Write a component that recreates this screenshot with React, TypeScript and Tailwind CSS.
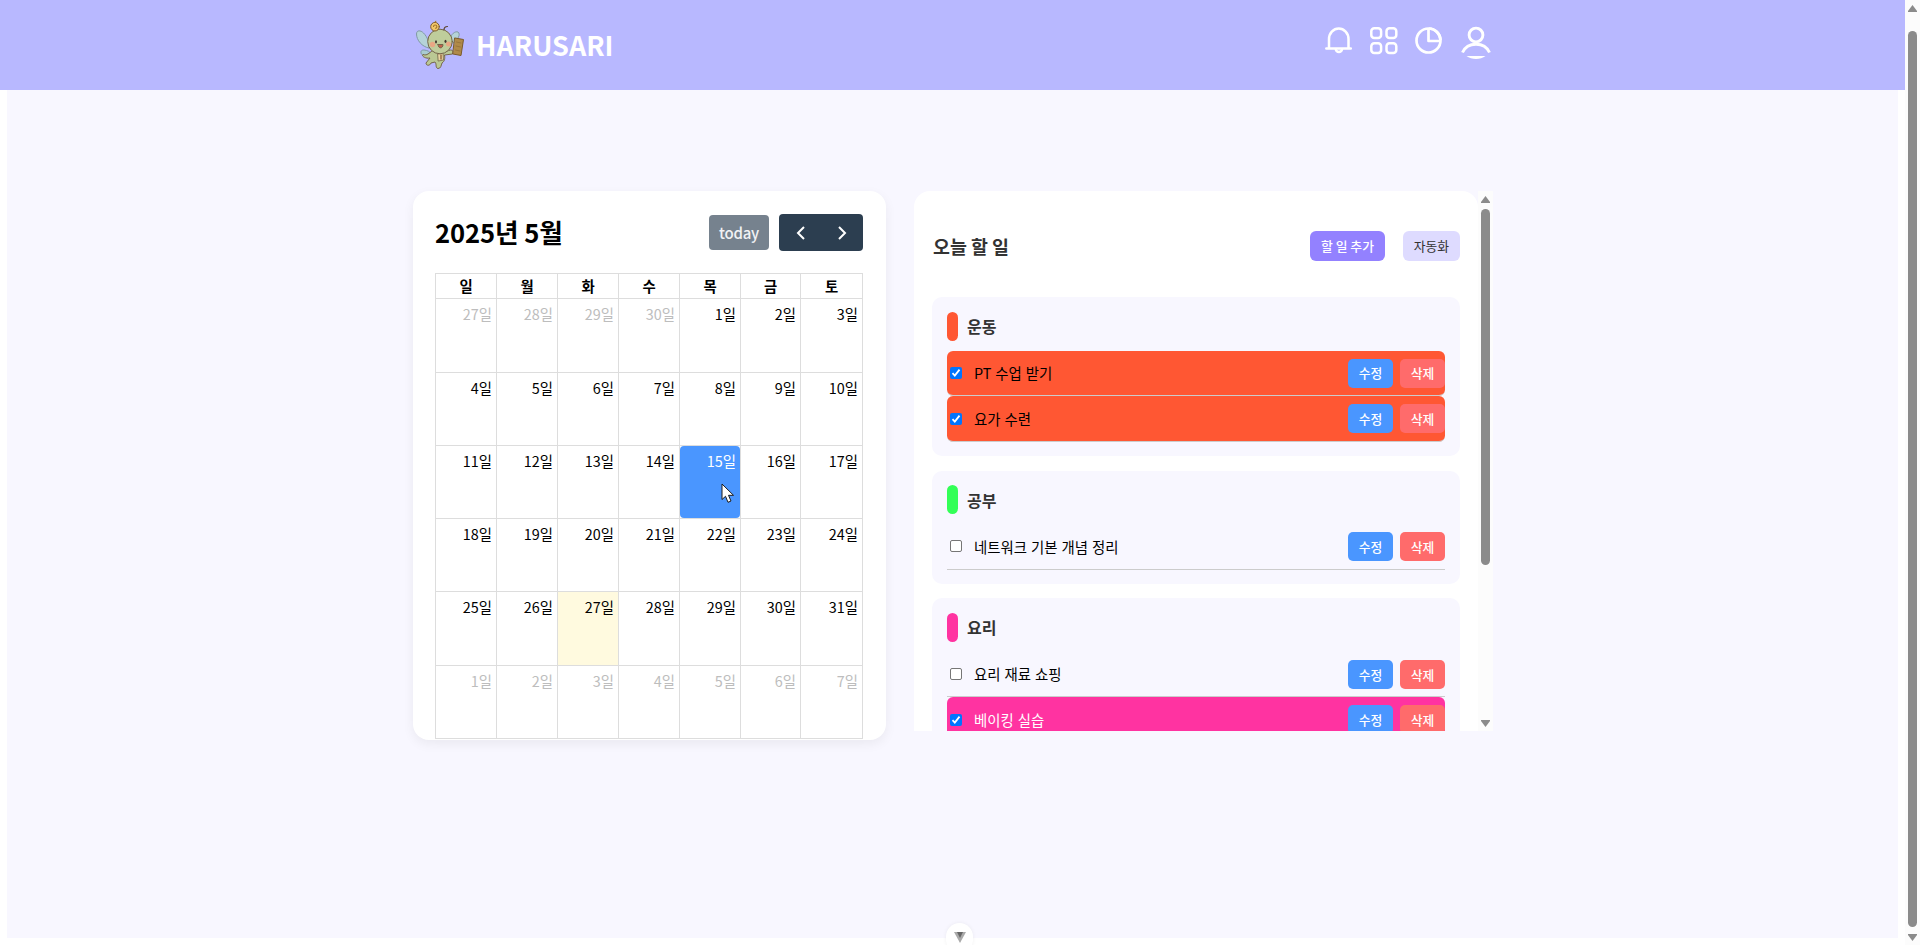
import React from "react";

const WEEKDAYS = ["일", "월", "화", "수", "목", "금", "토"];

type Day = { n: number; other: boolean };

const DAYS: Day[] = Array.from({ length: 42 }, (_, i) => {
  if (i < 4) return { n: 27 + i, other: true };
  if (i < 35) return { n: i - 3, other: false };
  return { n: i - 34, other: true };
});

function Mascot() {
  return (
    <svg className="h-[50px] w-[50px]" viewBox="0 0 50 50" fill="none" stroke="#75654a" strokeWidth="1" strokeLinejoin="round" strokeLinecap="round">
      <path d="M15 28C8 27 2.500 20 2.500 14c0-4 4-4 7-1 4 4 6 10 5.500 15z" fill="#b5d3d8" stroke="#8199a5" />
      <path d="M14 31c-5-2-7.500-1-7 2s5 3 9 0z" fill="#a9cbd2" stroke="#7f9aa5" />
      <path d="M36 19c1-5 5-8 8-7 3 2 0 8-5 11z" fill="#b5d3d8" stroke="#8199a5" />
      <path d="M18 31c-3 2-5 5-9 3.500-2 1 2 4.500 7 3.500l-4 5c0 3 4 3 5 0l4-1c2 2 0 6 3 6.500 3 0 3-3 4-5.500 3-2 3-5 2.500-8l8-1c2-2 0-4-2-4l-7 2z" fill="#bac894" />
      <path d="M24 34l5-1 .5 7-5 1z" fill="#e9d4a2" strokeWidth=".8" />
      <path d="M27 35v4" stroke="#8b5b33" strokeWidth="1.300" />
      <circle cx="26" cy="21.500" r="12.300" fill="#bfcd9b" />
      <circle cx="21" cy="6.700" r="4.300" fill="#f2c868" stroke="#7b5b32" />
      <path d="M19.500 6.500a1.700 1.700 0 1 1 2 1.800M21 2.300l.8-1" stroke="#a3742f" strokeWidth="1.100" />
      <path d="M30 10c0-3 1.500-3.500 3.500-3.500" stroke="#5c4634" strokeWidth="1.200" />
      <circle cx="18.500" cy="24.500" r="2.700" fill="#e9a783" stroke="none" />
      <circle cx="34.500" cy="24" r="2.500" fill="#e9a783" stroke="none" />
      <ellipse cx="22" cy="21.800" rx="1" ry="1.600" fill="#43372d" stroke="none" />
      <ellipse cx="31.500" cy="21.300" rx="1" ry="1.600" fill="#43372d" stroke="none" />
      <path d="M24 24.500h5c0 4.500-5 4.500-5 0z" fill="#c0634b" />
      <path d="M41 18l8.500 1.500-2.500 16-8-1.500z" fill="#b08a49" stroke="#7a5a2a" />
      <path d="M42.500 22l4.500 1M42 26l4.500 1M41.500 30l4.500 1" stroke="#8f6b36" strokeWidth=".7" />
    </svg>
  );
}

function Header() {
  return (
    <header className="h-[90px] w-[1905px] bg-[#b8b8ff]">
      <div className="flex h-full pl-[414px]">
        <div className="flex w-[911px] pt-[20px]">
          <Mascot />
          <h1 className="ml-[12px] mt-[5px] text-[27px] leading-[40px] font-bold text-white">HARUSARI</h1>
        </div>
        <div className="flex items-start gap-[17px] pt-[26px]">
          <svg className="-ml-px h-[29px] w-[29px]" viewBox="0 0 29 29" fill="none" stroke="#fff" strokeWidth="2.500" strokeLinecap="round">
            <path d="M5 22V13a9.700 10.500 0 0 1 19.500 0v9M2.300 22.500h24.500" />
            <path d="M11.800 23.500a3.200 3.200 0 0 0 6.200 0" />
          </svg>
          <svg className="h-[29px] w-[28px]" viewBox="0 0 28 29" fill="none" stroke="#fff" strokeWidth="2.500">
            <rect x="1.300" y="2.300" width="9.800" height="9.800" rx="3" />
            <rect x="16.500" y="2.300" width="9.800" height="9.800" rx="3" />
            <rect x="1.300" y="17.200" width="9.800" height="9.800" rx="3" />
            <rect x="16.500" y="17.200" width="9.800" height="9.800" rx="3" />
          </svg>
          <svg className="h-[29px] w-[28px]" viewBox="0 0 28 29" fill="none" stroke="#fff" strokeWidth="2.700" strokeLinejoin="round">
            <circle cx="13.500" cy="14.500" r="12" />
            <path d="M13.500 2v13H26" />
            <path d="M14 2.500A12 12 0 0 1 25.500 14" />
          </svg>
          <svg className="ml-px h-[33px] w-[30px]" viewBox="0 0 30 33" fill="none" stroke="#fff" strokeWidth="2.900">
            <circle cx="15" cy="9" r="6.900" />
            <path d="M1.500 26.500C6.500 15.500 23.500 15.500 28.500 26.500" />
            <path d="M5.500 30h19c-5 4-14 4-19 0z" fill="#fff" stroke="none" />
          </svg>
        </div>
      </div>
    </header>
  );
}

function Calendar() {
  return (
    <section className="h-[549px] w-[473px] rounded-[16px] bg-white px-[22px] pt-[23px] shadow-[0_4px_12px_rgba(0,0,0,0.06)]">
      <div className="flex h-[37px] w-[428px] items-center">
        <h2 className="flex-1 pb-[2px] text-[25.600px] leading-[35px] font-bold tracking-[-0.100px] text-black">2025년 5월</h2>
        <button className="mr-[10px] h-[35px] w-[60px] rounded-[4px] bg-[#76828e] text-[15px] leading-[35px] font-medium tracking-[-0.200px] text-[#f1f2f4]">today</button>
        <div className="flex h-[37px] w-[84px] items-center justify-between rounded-[4px] bg-[#2c3e50] pr-[14px] pl-[15px]">
          <svg width="14" height="16" viewBox="0 0 14 16" fill="none" stroke="#fff" strokeWidth="2"><path d="M10 2L4 8l6 6" /></svg>
          <svg width="14" height="16" viewBox="0 0 14 16" fill="none" stroke="#fff" strokeWidth="2"><path d="M4 2l6 6-6 6" /></svg>
        </div>
      </div>
      <div className="mt-[22px] grid w-[428px] grid-cols-[61px_61px_61px_61px_61px_60px_62px] grid-rows-[25px_74px_73px_73px_73px_74px_73px] border-t border-l border-[#ddd] text-black">
        {WEEKDAYS.map((d) => (
          <div key={d} className="border-r border-b border-[#ddd] text-center text-[14.400px] leading-[24px] font-bold">{d}</div>
        ))}
        {DAYS.map((d, i) => {
          const selected = !d.other && d.n === 15;
          const today = !d.other && d.n === 27;
          const tone = selected ? "text-white" : today ? "bg-[#fffadf]" : d.other ? "text-[#bdbdbd]" : "";
          return (
            <div key={i} className={"relative border-r border-b border-[#ddd] text-right text-[14.400px] leading-[20px] " + tone}>
              <div className={"h-full pt-[5px] pr-[4px] " + (selected ? "rounded-[4px] bg-[#4a96ff]" : "")}>{d.n}일</div>
              {selected && (
                <svg className="absolute top-[37px] left-[41px]" width="14" height="21" viewBox="0 0 14 21">
                  <path d="M1 1v15.500l3.500-3.200 2.500 6 3-1.300-2.500-5.700h5z" fill="#fff" stroke="#1c1c1c" />
                </svg>
              )}
            </div>
          );
        })}
      </div>
    </section>
  );
}

type Todo = { text: string; done?: string };

function Category({ name, bar, todos }: { name: string; bar: string; todos: Todo[] }) {
  return (
    <div className="mb-[14.300px] w-[528px] rounded-[10px] bg-[#f8f7ff] px-[15px] py-[14.500px]">
      <div className="mb-[10px] flex h-[29px] items-center">
        <span className={"h-[29px] w-[11px] rounded-[6px] " + bar} />
        <span className="ml-[9px] text-[16px] leading-[24px] font-bold text-[#333]">{name}</span>
      </div>
      {todos.map((t) => (
        <div key={t.text} className={"flex h-[45.500px] items-center border-b border-[#ccc] " + (t.done ? "rounded-[6px] " + t.done : "text-black")}>
          {t.done ? (
            <svg className="ml-[3px]" width="12" height="12" viewBox="0 0 12 12">
              <rect width="12" height="12" rx="2" fill="#0075ff" />
              <path d="M2.500 6.200l2.300 2.400 4.700-6" fill="none" stroke="#fff" strokeWidth="1.800" />
            </svg>
          ) : (
            <span className="ml-[3px] h-[12px] w-[12px] rounded-[2px] border border-[#767676] bg-white" />
          )}
          <span className="ml-[12px] flex-1 text-[14.400px] [word-spacing:0.8px]">{t.text}</span>
          <button className="mr-[7px] h-[29px] w-[45px] rounded-[5px] bg-[#4a96ff] text-[12.800px] font-medium text-white">수정</button>
          <button className="h-[29px] w-[45px] rounded-[5px] bg-[#ff6b6b] text-[12.800px] font-medium text-white">삭제</button>
        </div>
      ))}
    </div>
  );
}

function TodoPanel() {
  return (
    <section className="flex h-[540px] w-[579px] overflow-hidden">
      <div className="h-[700px] w-[564px] rounded-[16px] bg-white px-[18px] pt-[40px]">
        <div className="mb-[36.300px] flex h-[30px] w-[528px] items-center">
          <h3 className="ml-px flex-1 pt-px text-[18.400px] font-bold text-[#333]">오늘 할 일</h3>
          <button className="mr-[18px] h-[30px] w-[75px] rounded-[6px] bg-[#9381ff] text-[12.800px] font-medium text-white">할 일 추가</button>
          <button className="h-[30px] w-[57px] rounded-[6px] bg-[#dedbff] text-[12.800px] text-[#333]">자동화</button>
        </div>
        <Category name="운동" bar="bg-[#ff5733]" todos={[{ text: "PT 수업 받기", done: "bg-[#ff5733] text-black" }, { text: "요가 수련", done: "bg-[#ff5733] text-black" }]} />
        <Category name="공부" bar="bg-[#33ff57]" todos={[{ text: "네트워크 기본 개념 정리" }]} />
        <Category name="요리" bar="bg-[#ff33a1]" todos={[{ text: "요리 재료 쇼핑" }, { text: "베이킹 실습", done: "bg-[#ff33a1] text-white" }]} />
      </div>
      <div className="flex w-[15px] flex-col items-center bg-[#fcfcfc] pt-[5px]">
        <svg width="9" height="7" viewBox="0 0 9 7"><path d="M4.500 0L9 6v1H0V6z" fill="#8b8b8b" /></svg>
        <div className="mt-[6px] h-[356px] w-[9px] rounded-full bg-[#8b8b8b]" />
        <svg className="mt-[155px]" width="9" height="7" viewBox="0 0 9 7"><path d="M4.500 7L9 1V0H0v1z" fill="#8b8b8b" /></svg>
      </div>
    </section>
  );
}

export default function App() {
  return (
    <div className="relative flex h-[945px] w-[1920px] overflow-hidden bg-white font-['Noto_Sans_CJK_KR','Noto_Sans',sans-serif]">
      <div className="w-[1905px]">
        <Header />
        <main className="ml-[7px] flex h-[848px] w-[1891px] items-start gap-[28px] bg-[#f8f7ff] pt-[101px] pl-[406px]">
          <Calendar />
          <TodoPanel />
        </main>
      </div>
      <div className="flex w-[15px] flex-col items-center bg-[#fcfcfc] pt-[5px]">
        <svg width="9" height="7" viewBox="0 0 9 7"><path d="M4.500 0L9 6v1H0V6z" fill="#8b8b8b" /></svg>
        <div className="mt-[19px] h-[896px] w-[9px] rounded-full bg-[#8b8b8b]" />
        <svg className="mt-[7px]" width="9" height="7" viewBox="0 0 9 7"><path d="M4.500 7L9 1V0H0v1z" fill="#8b8b8b" /></svg>
      </div>
      <div className="absolute top-[923px] left-[946px] flex h-[30px] w-[27px] justify-center rounded-full bg-white pt-[9px] shadow-[0_0_4px_rgba(0,0,0,0.06)]">
        <svg width="12" height="11" viewBox="0 0 12 11"><path d="M0 0h12L6 11z" fill="#aaa" /><path d="M3 0h6L6 6z" fill="#666" /></svg>
      </div>
    </div>
  );
}
